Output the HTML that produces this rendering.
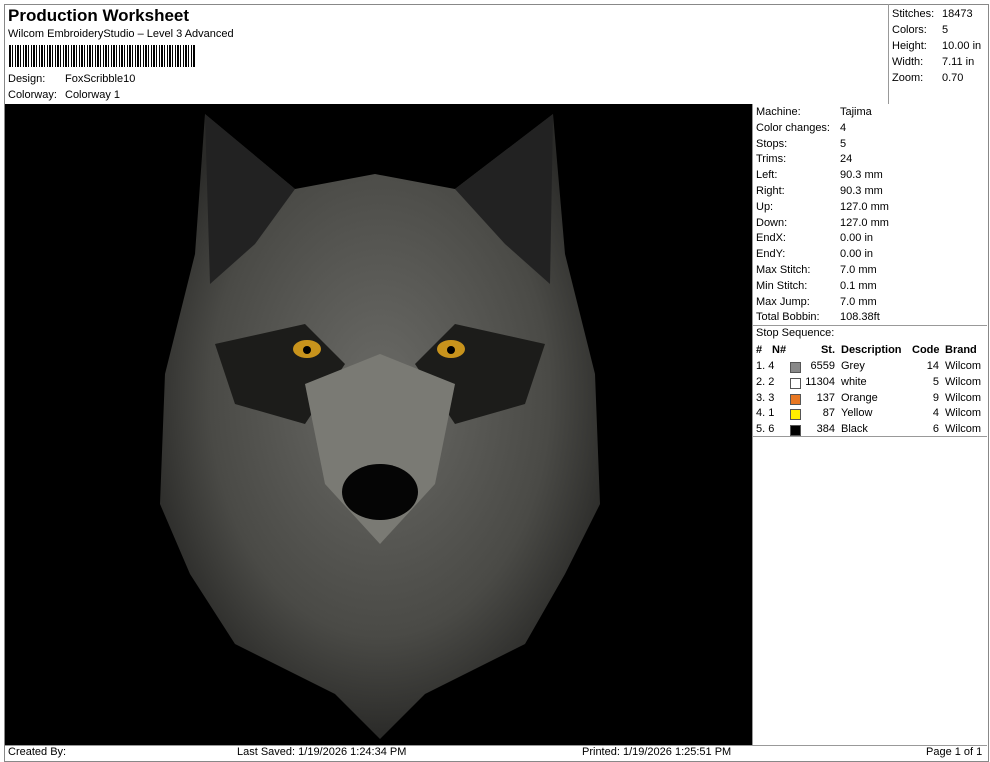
<!DOCTYPE html>
<html><head><style>
body{margin:0;width:990px;height:762px;background:#fff;font-family:"Liberation Sans",sans-serif;font-size:11px;color:#000;position:relative;overflow:hidden}
.a{position:absolute;white-space:nowrap}
.bx{position:absolute;border:1px solid #999}
</style></head><body>
<div class="bx" style="left:4px;top:4px;width:983px;height:756px;border-color:#888"></div>
<div class="a" style="left:8px;top:6px;font-size:17px;font-weight:bold">Production Worksheet</div>
<div class="a" style="left:8px;top:28px">Wilcom EmbroideryStudio – Level 3 Advanced</div>
<div class="a" style="left:9px;top:45px;width:186px;height:22px;background:repeating-linear-gradient(90deg,#000 0 2px,#fff 2px 3px,#000 3px 4px,#fff 4px 6px,#000 6px 7px,#fff 7px 8px)"></div>
<div class="a" style="left:8px;top:73px">Design:</div><div class="a" style="left:65px;top:73px">FoxScribble10</div>
<div class="a" style="left:8px;top:89px">Colorway:</div><div class="a" style="left:65px;top:89px">Colorway 1</div>
<div class="a" style="left:888px;top:4px;width:1px;height:100px;background:#999"></div>
<div class="a" style="left:892px;top:6px;line-height:16px">Stitches:<br>Colors:<br>Height:<br>Width:<br>Zoom:</div>
<div class="a" style="left:942px;top:6px;line-height:16px">18473<br>5<br>10.00 in<br>7.11 in<br>0.70</div>
<div class="a" style="left:5px;top:104px;width:747px;height:641px;background:#000;overflow:hidden">
<svg width="747" height="641" viewBox="0 0 747 641">
<defs><radialGradient id="g" cx="0.5" cy="0.45" r="0.55"><stop offset="0" stop-color="#6a6a66"/><stop offset="0.7" stop-color="#4a4a46"/><stop offset="1" stop-color="#2a2a28"/></radialGradient></defs>
<path d="M200 10 L290 85 L370 70 L450 85 L548 10 L560 150 L590 270 L595 400 L560 470 L520 540 L420 590 L375 635 L330 590 L230 540 L185 470 L155 400 L160 270 L190 150 Z" fill="url(#g)"/>
<path d="M200 10 L290 85 L250 140 L205 180 Z M548 10 L450 85 L500 140 L545 180 Z" fill="#222"/>
<path d="M210 240 L300 220 L340 260 L300 320 L230 300 Z M540 240 L450 220 L410 260 L450 320 L520 300 Z" fill="#1c1c1a"/>
<path d="M300 280 L375 250 L450 280 L430 380 L375 440 L320 380 Z" fill="#7a7a74"/>
<ellipse cx="375" cy="388" rx="38" ry="28" fill="#050505"/>
<ellipse cx="302" cy="245" rx="14" ry="9" fill="#c8931c"/><ellipse cx="446" cy="245" rx="14" ry="9" fill="#c8931c"/>
<circle cx="302" cy="246" r="4" fill="#000"/><circle cx="446" cy="246" r="4" fill="#000"/>
</svg></div>
<div class="a" style="left:752px;top:104px;width:1px;height:641px;background:#999"></div>
<div class="a" style="left:756px;top:105px;line-height:15.8px">Machine:<br>Color changes:<br>Stops:<br>Trims:<br>Left:<br>Right:<br>Up:<br>Down:<br>EndX:<br>EndY:<br>Max Stitch:<br>Min Stitch:<br>Max Jump:<br>Total Bobbin:</div>
<div class="a" style="left:840px;top:105px;line-height:15.8px">Tajima<br>4<br>5<br>24<br>90.3 mm<br>90.3 mm<br>127.0 mm<br>127.0 mm<br>0.00 in<br>0.00 in<br>7.0 mm<br>0.1 mm<br>7.0 mm<br>108.38ft</div>
<div class="a" style="left:753px;top:325px;width:234px;height:1px;background:#999"></div>
<div class="a" style="left:756px;top:327px">Stop Sequence:</div>
<div class="a" style="left:753px;top:343px;width:234px;line-height:15.8px">
<div style="position:relative;height:16px;font-weight:bold;text-decoration:underline"><span class="a" style="left:3px">#</span><span class="a" style="left:19px">N#</span><span class="a" style="right:152px">St.</span><span class="a" style="left:88px">Description</span><span class="a" style="left:159px">Code</span><span class="a" style="left:192px">Brand</span></div>
<div style="position:relative;height:15.8px"><span class="a" style="left:3px">1. 4</span><span class="a" style="left:37px;top:3px;width:9px;height:9px;background:#888;border:1px solid #555"></span><span class="a" style="right:152px">6559</span><span class="a" style="left:88px">Grey</span><span class="a" style="right:48px">14</span><span class="a" style="left:192px">Wilcom</span></div>
<div style="position:relative;height:15.8px"><span class="a" style="left:3px">2. 2</span><span class="a" style="left:37px;top:3px;width:9px;height:9px;background:#fff;border:1px solid #555"></span><span class="a" style="right:152px">11304</span><span class="a" style="left:88px">white</span><span class="a" style="right:48px">5</span><span class="a" style="left:192px">Wilcom</span></div>
<div style="position:relative;height:15.8px"><span class="a" style="left:3px">3. 3</span><span class="a" style="left:37px;top:3px;width:9px;height:9px;background:#e87722;border:1px solid #555"></span><span class="a" style="right:152px">137</span><span class="a" style="left:88px">Orange</span><span class="a" style="right:48px">9</span><span class="a" style="left:192px">Wilcom</span></div>
<div style="position:relative;height:15.8px"><span class="a" style="left:3px">4. 1</span><span class="a" style="left:37px;top:3px;width:9px;height:9px;background:#ffee00;border:1px solid #555"></span><span class="a" style="right:152px">87</span><span class="a" style="left:88px">Yellow</span><span class="a" style="right:48px">4</span><span class="a" style="left:192px">Wilcom</span></div>
<div style="position:relative;height:15.8px"><span class="a" style="left:3px">5. 6</span><span class="a" style="left:37px;top:3px;width:9px;height:9px;background:#000;border:1px solid #555"></span><span class="a" style="right:152px">384</span><span class="a" style="left:88px">Black</span><span class="a" style="right:48px">6</span><span class="a" style="left:192px">Wilcom</span></div>
</div>
<div class="a" style="left:753px;top:436px;width:234px;height:1px;background:#999"></div>
<div class="a" style="left:5px;top:745px;width:982px;height:1px;background:#999"></div>
<div class="a" style="left:8px;top:746px">Created By:</div>
<div class="a" style="left:237px;top:746px">Last Saved: 1/19/2026 1:24:34 PM</div>
<div class="a" style="left:582px;top:746px">Printed: 1/19/2026 1:25:51 PM</div>
<div class="a" style="left:926px;top:746px">Page 1 of 1</div>
</body></html>
